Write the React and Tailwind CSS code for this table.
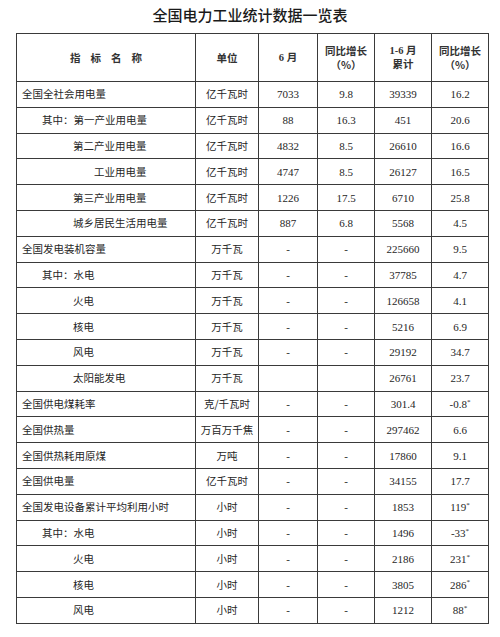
import React from "react";

// indent: 0 = top level, 1 = "其中：", 2 = sub item, 3 = deeper sub item
const rows = [
  { name: "全国全社会用电量", indent: 0, unit: "亿千瓦时", m: "7033", yoy: "9.8", cum: "39339", cumYoy: "16.2" },
  { name: "其中：第一产业用电量", indent: 1, unit: "亿千瓦时", m: "88", yoy: "16.3", cum: "451", cumYoy: "20.6" },
  { name: "第二产业用电量", indent: 2, unit: "亿千瓦时", m: "4832", yoy: "8.5", cum: "26610", cumYoy: "16.6" },
  { name: "工业用电量", indent: 3, unit: "亿千瓦时", m: "4747", yoy: "8.5", cum: "26127", cumYoy: "16.5" },
  { name: "第三产业用电量", indent: 2, unit: "亿千瓦时", m: "1226", yoy: "17.5", cum: "6710", cumYoy: "25.8" },
  { name: "城乡居民生活用电量", indent: 2, unit: "亿千瓦时", m: "887", yoy: "6.8", cum: "5568", cumYoy: "4.5" },
  { name: "全国发电装机容量", indent: 0, unit: "万千瓦", m: "-", yoy: "-", cum: "225660", cumYoy: "9.5" },
  { name: "其中：水电", indent: 1, unit: "万千瓦", m: "-", yoy: "-", cum: "37785", cumYoy: "4.7" },
  { name: "火电", indent: 2, unit: "万千瓦", m: "-", yoy: "-", cum: "126658", cumYoy: "4.1" },
  { name: "核电", indent: 2, unit: "万千瓦", m: "-", yoy: "-", cum: "5216", cumYoy: "6.9" },
  { name: "风电", indent: 2, unit: "万千瓦", m: "-", yoy: "-", cum: "29192", cumYoy: "34.7" },
  { name: "太阳能发电", indent: 2, unit: "万千瓦", m: "", yoy: "", cum: "26761", cumYoy: "23.7" },
  { name: "全国供电煤耗率", indent: 0, unit: "克/千瓦时", m: "-", yoy: "-", cum: "301.4", cumYoy: "-0.8", star: true },
  { name: "全国供热量", indent: 0, unit: "万百万千焦", m: "-", yoy: "-", cum: "297462", cumYoy: "6.6" },
  { name: "全国供热耗用原煤", indent: 0, unit: "万吨", m: "-", yoy: "-", cum: "17860", cumYoy: "9.1" },
  { name: "全国供电量", indent: 0, unit: "亿千瓦时", m: "-", yoy: "-", cum: "34155", cumYoy: "17.7" },
  { name: "全国发电设备累计平均利用小时", indent: 0, unit: "小时", m: "-", yoy: "-", cum: "1853", cumYoy: "119", star: true },
  { name: "其中：水电", indent: 1, unit: "小时", m: "-", yoy: "-", cum: "1496", cumYoy: "-33", star: true },
  { name: "火电", indent: 2, unit: "小时", m: "-", yoy: "-", cum: "2186", cumYoy: "231", star: true },
  { name: "核电", indent: 2, unit: "小时", m: "-", yoy: "-", cum: "3805", cumYoy: "286", star: true },
  { name: "风电", indent: 2, unit: "小时", m: "-", yoy: "-", cum: "1212", cumYoy: "88", star: true },
];

const indentClass = ["pl-[5px]", "pl-[25px]", "pl-[56px]", "pl-[77px]"];

const cjk = "font-['Noto_Sans_CJK_SC','Noto_Sans',sans-serif]";
const num = "font-['Liberation_Serif','Noto_Sans_CJK_SC',serif]";
const cell = "border border-[#3a3a3a] p-0 text-center align-middle";

export default function App() {
  return (
    <div className="w-[500px] h-[637px] bg-white text-[#262626]">
      <div className={`pt-[5px] pb-[8px] text-center text-[15px] leading-[20px] font-medium text-[#1a1a1a] ${cjk}`}>
        全国电力工业统计数据一览表
      </div>
      <table className="ml-[16px] w-[472px] table-fixed border-collapse border-[1.5px] border-[#333]">
        <colgroup>
          <col className="w-[179px]" />
          <col className="w-[63px]" />
          <col className="w-[59px]" />
          <col className="w-[57px]" />
          <col className="w-[57px]" />
          <col className="w-[57px]" />
        </colgroup>
        <thead>
          <tr className="h-[48px] text-[10.5px] leading-[14px] font-bold text-[#333]">
            <th className={`${cell} ${cjk}`}>
              <span className="tracking-[10px] pl-[10px]">指标名称</span>
            </th>
            <th className={`${cell} ${cjk}`}>单位</th>
            <th className={`${cell} ${num}`}>6 月</th>
            <th className={`${cell} ${cjk}`}>
              同比增长
              <br />
              （%）
            </th>
            <th className={`${cell} ${num}`}>
              1-6 月
              <br />
              累计
            </th>
            <th className={`${cell} ${cjk}`}>
              同比增长
              <br />
              （%）
            </th>
          </tr>
        </thead>
        <tbody>
          {rows.map((r, i) => (
            <tr key={i} className="h-[25.8px] leading-[14px]">
              <td className={`border border-[#3a3a3a] p-0 align-middle text-left text-[10.5px] ${cjk} ${indentClass[r.indent]}`}>
                {r.name}
              </td>
              <td className={`${cell} text-[10.5px] ${cjk}`}>{r.unit}</td>
              <td className={`${cell} text-[11px] ${num}`}>{r.m}</td>
              <td className={`${cell} text-[11px] ${num}`}>{r.yoy}</td>
              <td className={`${cell} text-[11px] ${num}`}>{r.cum}</td>
              <td className={`${cell} text-[11px] ${num}`}>
                {r.cumYoy}
                {r.star && <sup className="text-[7px] top-[-0.6em]">*</sup>}
              </td>
            </tr>
          ))}
        </tbody>
      </table>
    </div>
  );
}
